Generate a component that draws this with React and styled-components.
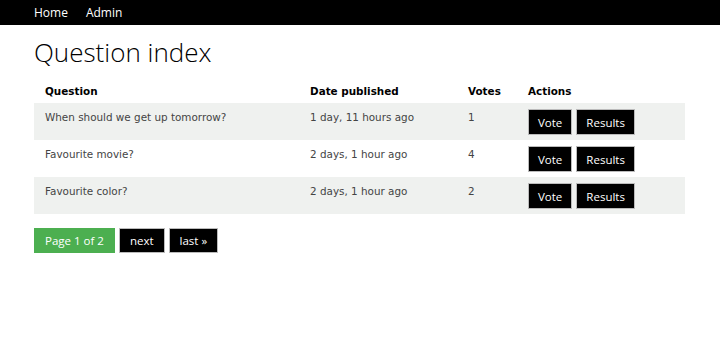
import React from 'react';
import styled, {createGlobalStyle} from 'styled-components';

const GlobalStyle = createGlobalStyle`
    body{
        margin: 0;
        background: #fff;
        font-family: "Open Sans", "Noto Sans", sans-serif;
    }
`;

const questions = [
    {id: 1, text: 'When should we get up tomorrow?', date: '1 day, 11 hours ago', votes: 1},
    {id: 2, text: 'Favourite movie?', date: '2 days, 1 hour ago', votes: 4},
    {id: 3, text: 'Favourite color?', date: '2 days, 1 hour ago', votes: 2},
];

function App() {
    return (
        <>
            <GlobalStyle />
            <NavBar>
                <NavLink href="#">Home</NavLink>
                <NavLink href="#">Admin</NavLink>
            </NavBar>
            <Main>
                <Title>Question index</Title>
                <Table>
                    <thead>
                        <tr>
                            <Th $w={265}>Question</Th>
                            <Th $w={158}>Date published</Th>
                            <Th $w={60}>Votes</Th>
                            <Th>Actions</Th>
                        </tr>
                    </thead>
                    <tbody>
                        {questions.map((q, i) => (
                            <Row key={q.id} $striped={i % 2 === 0}>
                                <Td>{q.text}</Td>
                                <Td>{q.date}</Td>
                                <Td>{q.votes}</Td>
                                <ActionCell>
                                    <Actions>
                                        <Button>Vote</Button>
                                        <Button>Results</Button>
                                    </Actions>
                                </ActionCell>
                            </Row>
                        ))}
                    </tbody>
                </Table>
                <Pagination>
                    <PageItem $current>Page 1 of 2</PageItem>
                    <PageItem>next</PageItem>
                    <PageItem>last &raquo;</PageItem>
                </Pagination>
            </Main>
        </>
    )
}

const NavBar = styled.nav`
    background: #000;
    height: 25px;
    display: flex;
    align-items: center;
    gap: 18px;
    padding: 0 34px;
`;

const NavLink = styled.a`
    color: #fff;
    text-decoration: none;
    font-size: 12px;
    line-height: 25px;
    padding-bottom: 1px;
`;

const Main = styled.main`
    padding: 0 35px 0 34px;
`;

const Title = styled.h1`
    font-weight: 300;
    font-size: 26px;
    line-height: 1;
    color: #000;
    margin: 14px 0 14px;
`;

const Table = styled.table`
    width: 651px;
    border-collapse: collapse;
    font-family: Verdana, "DejaVu Sans", sans-serif;
    font-size: 10.4px;
`;

const Th = styled.th`
    text-align: left;
    color: #000;
    font-weight: bold;
    padding: 6px 11px 6px;
    height: 12px;
    ${p => p.$w ? `width: ${p.$w - 22}px;` : ''}
`;

const Row = styled.tr`
    background: ${p => p.$striped ? '#eff1ef' : '#fff'};
`;

const Td = styled.td`
    color: #444;
    vertical-align: top;
    padding: 8px 11px;
`;

const ActionCell = styled.td`
    vertical-align: top;
    padding: 6px 11px 5px;
`;

const Actions = styled.div`
    display: flex;
    gap: 4px;
`;

const Button = styled.button`
    background: #000;
    color: #fff;
    border: 1px solid #bbb;
    height: 26px;
    padding: 0 9px;
    font-family: "Open Sans", "Noto Sans", sans-serif;
    font-size: 11.5px;
    cursor: pointer;
`;

const Pagination = styled.div`
    display: flex;
    gap: 4px;
    margin-top: 14px;
`;

const PageItem = styled.span`
    display: inline-flex;
    align-items: center;
    height: 25px;
    box-sizing: border-box;
    padding: 0 10px;
    font-size: 11.5px;
    color: #fff;
    background: ${p => p.$current ? '#4caf50' : '#000'};
    border: 1px solid ${p => p.$current ? '#4caf50' : '#bbb'};
`;

export default App
